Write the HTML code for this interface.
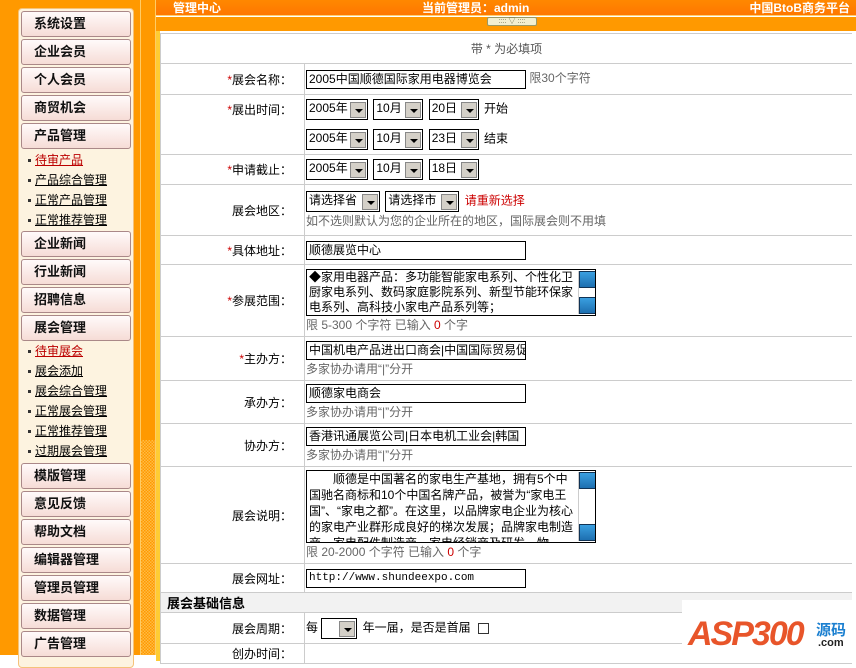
<!DOCTYPE html>
<html><head><meta charset="utf-8"><style>
*{margin:0;padding:0;box-sizing:border-box}
body{width:856px;height:655px;overflow:hidden;background:#fff;font:12px "Liberation Sans","Noto Sans CJK SC","WenQuanYi Zen Hei",sans-serif;color:#000;position:relative}
.left{position:absolute;left:0;top:0;width:140px;height:655px;background:#f90}
.panel{position:absolute;left:18px;top:8px;width:116px;height:660px;background:#fdf3e0;border-radius:4px;border:1px solid #f5c27a}
.btn{position:absolute;left:21px;width:110px;height:26px;border:1px solid #a88;border-radius:3px;background:linear-gradient(#fffafa,#f6dcd6);font-weight:bold;font-size:13px;padding-left:12px;line-height:24px;color:#111}
.sub{position:absolute;left:28px;font-size:12px;line-height:20px}
.sub u{margin-left:4px}
.sub::before{content:"";display:inline-block;width:3px;height:3px;background:#333;vertical-align:middle}
.red{color:#b00}
.sb{position:absolute;left:140px;top:0;width:16px;height:655px;background:#f90;border-left:1px solid #fc6;border-right:1px solid #fc6}
.sbc{position:absolute;left:141px;top:440px;width:14px;height:215px;background:repeating-conic-gradient(#fb4 0 25%,#f90 0 50%) 0 0/3px 3px}
.top{position:absolute;left:156px;top:0;width:700px;height:16px;background:linear-gradient(#f80,#f70);color:#fff;font-weight:bold;font-size:12px;line-height:16px;border-bottom:1px solid #ffd070}
.strip{position:absolute;left:156px;top:17px;width:700px;height:14px;background:#f90}
.tog{position:absolute;left:487px;top:17px;width:50px;height:9px;background:#f3efd0;border:1px solid #996;border-radius:2px;font-size:7px;line-height:7px;text-align:center;color:#664}
.main{position:absolute;left:156px;top:31px;width:700px;height:630px;background:#fff;border-left:4px solid #fc3}
table{position:absolute;left:160px;top:33px;width:692px;border-collapse:collapse;border-left:1px solid #ccc}
td{border:1px solid #ccc;border-left:none;border-right:none}
td.l{width:144px;text-align:right;padding-right:12px;font-size:12px;border-right:1px solid #ccc}
td.r{padding-left:1px;font-size:12px}
.s{color:#c00}
.in{display:inline-block;border:1px solid #000;height:19px;width:220px;line-height:17px;padding-left:2px;font-size:12px;vertical-align:middle;white-space:nowrap;overflow:hidden}
.sel{display:inline-block;border:1px solid #000;height:21px;line-height:17px;padding-left:2px;font-size:12px;vertical-align:middle;position:relative;margin-right:2px}
.sel i{position:absolute;right:1px;top:2px;width:16px;height:16px;background:#d4d0c8;border:1px solid #888}
.sel i::after{content:"";position:absolute;left:4px;top:6px;border:4px solid transparent;border-top:4px solid #000;border-bottom:0}
.g{color:#666}
.ta{display:inline-block;border:1px solid #000;width:290px;height:47px;overflow:hidden;position:relative;line-height:15px;padding:0 20px 0 2px;font-size:12px;vertical-align:top}
.ta b{position:absolute;right:1px;top:1px;width:16px;height:43px;background:#fff;border-left:1px solid #ccc}
.ta b::before,.ta b::after{content:"";position:absolute;left:0;width:15px;height:15px;background:linear-gradient(#3a9fe0,#1d6fb0);border:1px solid #135}
.ta b::before{top:0}.ta b::after{bottom:0}
</style></head><body>
<div class="left"></div>
<div class="panel"></div>
<div class="btn" style="top:11px">系统设置</div>
<div class="btn" style="top:39px">企业会员</div>
<div class="btn" style="top:67px">个人会员</div>
<div class="btn" style="top:95px">商贸机会</div>
<div class="btn" style="top:123px">产品管理</div>
<div class="sub" style="top:150px"><u class="red">待审产品</u></div>
<div class="sub" style="top:170px"><u>产品综合管理</u></div>
<div class="sub" style="top:190px"><u>正常产品管理</u></div>
<div class="sub" style="top:210px"><u>正常推荐管理</u></div>
<div class="btn" style="top:231px">企业新闻</div>
<div class="btn" style="top:259px">行业新闻</div>
<div class="btn" style="top:287px">招聘信息</div>
<div class="btn" style="top:315px">展会管理</div>
<div class="sub" style="top:341px"><u class="red">待审展会</u></div>
<div class="sub" style="top:361px"><u>展会添加</u></div>
<div class="sub" style="top:381px"><u>展会综合管理</u></div>
<div class="sub" style="top:401px"><u>正常展会管理</u></div>
<div class="sub" style="top:421px"><u>正常推荐管理</u></div>
<div class="sub" style="top:441px"><u>过期展会管理</u></div>
<div class="btn" style="top:463px">模版管理</div>
<div class="btn" style="top:491px">意见反馈</div>
<div class="btn" style="top:519px">帮助文档</div>
<div class="btn" style="top:547px">编辑器管理</div>
<div class="btn" style="top:575px">管理员管理</div>
<div class="btn" style="top:603px">数据管理</div>
<div class="btn" style="top:631px">广告管理</div>
<div class="sb"></div><div class="sbc"></div>
<div class="top"><span style="position:absolute;left:17px">管理中心</span><span style="position:absolute;left:266px">当前管理员：admin</span><span style="position:absolute;right:6px">中国BtoB商务平台</span></div>
<div class="strip"></div>
<div class="tog">:::: ▽ ::::</div>
<div class="main"></div>
<table>
<tr style="height:30px"><td colspan="2" style="text-align:center;color:#555;border-top:1px solid #ccc">带 * 为必填项</td></tr>
<tr style="height:31px"><td class="l"><span class="s">*</span>展会名称：</td><td class="r"><span class="in">2005中国顺德国际家用电器博览会</span> <span class="g">限30个字符</span></td></tr>
<tr style="height:30px"><td class="l" style="border-bottom:none"><span class="s">*</span>展出时间：</td><td class="r" style="border-bottom:none"><span class="sel" style="width:62px">2005年<i></i></span> <span class="sel" style="width:50px">10月<i></i></span> <span class="sel" style="width:50px">20日<i></i></span> 开始</td></tr>
<tr style="height:30px"><td class="l" style="border-top:none"></td><td class="r" style="border-top:none"><span class="sel" style="width:62px">2005年<i></i></span> <span class="sel" style="width:50px">10月<i></i></span> <span class="sel" style="width:50px">23日<i></i></span> 结束</td></tr>
<tr style="height:30px"><td class="l"><span class="s">*</span>申请截止：</td><td class="r"><span class="sel" style="width:62px">2005年<i></i></span> <span class="sel" style="width:50px">10月<i></i></span> <span class="sel" style="width:50px">18日<i></i></span></td></tr>
<tr style="height:51px"><td class="l">展会地区：</td><td class="r"><span class="sel" style="width:74px">请选择省<i></i></span> <span class="sel" style="width:74px">请选择市<i></i></span> <span style="color:#c00">请重新选择</span><br><span class="g">如不选则默认为您的企业所在的地区，国际展会则不用填</span></td></tr>
<tr style="height:29px"><td class="l"><span class="s">*</span>具体地址：</td><td class="r"><span class="in">顺德展览中心</span></td></tr>
<tr style="height:72px"><td class="l"><span class="s">*</span>参展范围：</td><td class="r"><span class="ta">◆家用电器产品：多功能智能家电系列、个性化卫厨家电系列、数码家庭影院系列、新型节能环保家电系列、高科技小家电产品系列等；<b></b></span><br><span class="g">限 5-300 个字符 已输入 <span class="s">0</span> 个字</span></td></tr>
<tr style="height:44px"><td class="l"><span class="s">*</span>主办方：</td><td class="r"><span class="in">中国机电产品进出口商会|中国国际贸易促</span><br><span class="g">多家协办请用“|”分开</span></td></tr>
<tr style="height:43px"><td class="l">承办方：</td><td class="r"><span class="in">顺德家电商会</span><br><span class="g">多家协办请用“|”分开</span></td></tr>
<tr style="height:43px"><td class="l">协办方：</td><td class="r"><span class="in">香港讯通展览公司|日本电机工业会|韩国</span><br><span class="g">多家协办请用“|”分开</span></td></tr>
<tr style="height:97px"><td class="l">展会说明：</td><td class="r"><span class="ta" style="height:73px;line-height:16px">　　顺德是中国著名的家电生产基地，拥有5个中国驰名商标和10个中国名牌产品，被誉为“家电王国”、“家电之都”。在这里，以品牌家电企业为核心的家电产业群形成良好的梯次发展；品牌家电制造商、家电配件制造商、家电经销商及研发、物<b style="height:69px"></b></span><br><span class="g">限 20-2000 个字符 已输入 <span class="s">0</span> 个字</span></td></tr>
<tr style="height:29px"><td class="l">展会网址：</td><td class="r"><span class="in" style="font-family:'Liberation Mono',monospace;font-size:11px">http://www.shundeexpo.com</span></td></tr>
<tr style="height:20px;background:#f2f2f2"><td colspan="2" style="font-weight:bold;font-size:13px;padding-left:6px">展会基础信息</td></tr>
<tr style="height:31px"><td class="l">展会周期：</td><td class="r">每 <span class="sel" style="width:36px">&nbsp;<i></i></span> 年一届，是否是首届 <span style="display:inline-block;width:11px;height:11px;border:1px solid #333;vertical-align:middle;margin-left:4px"></span></td></tr>
<tr style="height:20px"><td class="l">创办时间：</td><td class="r"></td></tr>
</table>
<div style="position:absolute;left:682px;top:600px;width:174px;height:55px;background:#fff"></div>
<div style="position:absolute;left:688px;top:615px;font:italic bold 34px 'Liberation Sans',sans-serif;color:#e8552a;letter-spacing:-2px">ASP300</div>
<div style="position:absolute;left:816px;top:619px;font:bold 15px 'Noto Sans CJK SC',sans-serif;color:#1a7fd0">源码</div>
<div style="position:absolute;left:818px;top:637px;font:bold 11px 'Liberation Sans',sans-serif;color:#222">.com</div>
</body></html>
